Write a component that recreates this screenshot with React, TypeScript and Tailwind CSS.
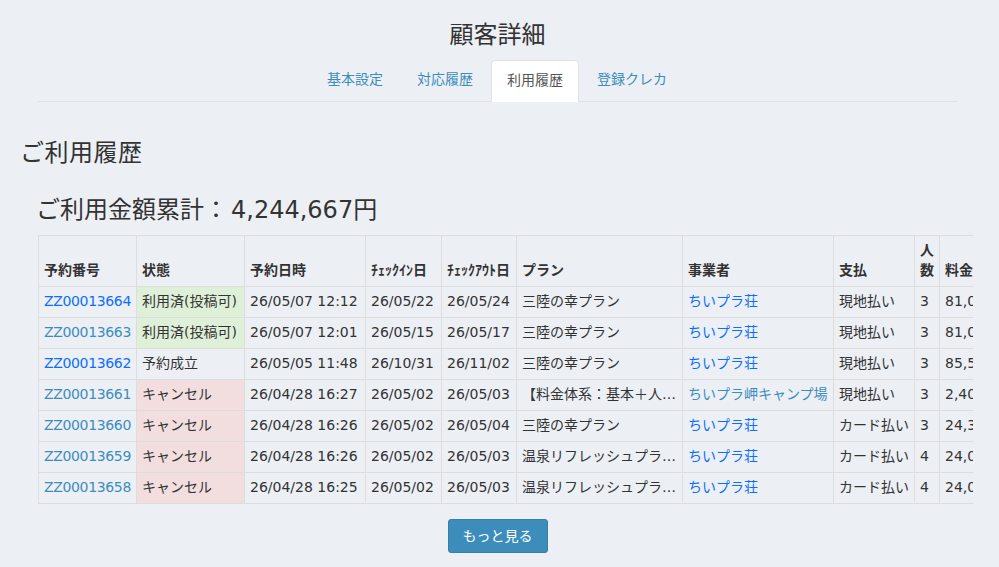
const F = "font-['DejaVu_Sans','Noto_Sans_CJK_JP',sans-serif]";

const colW = ["w-[98px]", "w-[108px]", "w-[121px]", "w-[76px]", "w-[75px]", "w-[166px]", "w-[151px]", "w-[81px]", "w-[25px]", "w-[90px]"];

type Row = {
  id: string;
  fresh: boolean;
  status: string;
  tone: "ok" | "none" | "cancel";
  at: string;
  inn: string;
  out: string;
  plan: string;
  vendor: string;
  vendorOld?: boolean;
  pay: string;
  n: string;
  fee: string;
};

const rows: Row[] = [
  { id: "ZZ00013664", fresh: true, status: "利用済(投稿可)", tone: "ok", at: "26/05/07 12:12", inn: "26/05/22", out: "26/05/24", plan: "三陸の幸プラン", vendor: "ちいプラ荘", pay: "現地払い", n: "3", fee: "81,000" },
  { id: "ZZ00013663", fresh: false, status: "利用済(投稿可)", tone: "ok", at: "26/05/07 12:01", inn: "26/05/15", out: "26/05/17", plan: "三陸の幸プラン", vendor: "ちいプラ荘", pay: "現地払い", n: "3", fee: "81,000" },
  { id: "ZZ00013662", fresh: true, status: "予約成立", tone: "none", at: "26/05/05 11:48", inn: "26/10/31", out: "26/11/02", plan: "三陸の幸プラン", vendor: "ちいプラ荘", pay: "現地払い", n: "3", fee: "85,500" },
  { id: "ZZ00013661", fresh: false, status: "キャンセル", tone: "cancel", at: "26/04/28 16:27", inn: "26/05/02", out: "26/05/03", plan: "【料金体系：基本＋人数】プラン", vendor: "ちいプラ岬キャンプ場", vendorOld: true, pay: "現地払い", n: "3", fee: "2,400" },
  { id: "ZZ00013660", fresh: false, status: "キャンセル", tone: "cancel", at: "26/04/28 16:26", inn: "26/05/02", out: "26/05/04", plan: "三陸の幸プラン", vendor: "ちいプラ荘", pay: "カード払い", n: "3", fee: "24,300" },
  { id: "ZZ00013659", fresh: false, status: "キャンセル", tone: "cancel", at: "26/04/28 16:26", inn: "26/05/02", out: "26/05/03", plan: "温泉リフレッシュプラン朝食付き", vendor: "ちいプラ荘", pay: "カード払い", n: "4", fee: "24,000" },
  { id: "ZZ00013658", fresh: false, status: "キャンセル", tone: "cancel", at: "26/04/28 16:25", inn: "26/05/02", out: "26/05/03", plan: "温泉リフレッシュプラン朝食付き", vendor: "ちいプラ荘", pay: "カード払い", n: "4", fee: "24,000" },
];

const th = "border border-[#dddddd] px-[5px] pb-[6px] pt-0 align-bottom text-left font-bold leading-[20px]";
const td = "border border-[#dddddd] px-[5px] h-[31px] pt-0 pb-[2px] align-middle leading-[20px] whitespace-nowrap overflow-hidden text-ellipsis";
const fresh = "text-[#0d6efd]";
const old = "text-[#3c8dbc]";

export default function App() {
  return (
    <div className={`${F} h-[567px] overflow-hidden bg-[#ecf0f5] text-[14px] text-[#333333]`}>
      <h1 className="pr-[4px] pt-[18px] text-center text-[24px] font-normal leading-[34px]">顧客詳細</h1>

      <nav className="ml-[38px] mr-[41px] mt-[8px] flex h-[42px] justify-center gap-[4px] border-b border-[#dfe3e8] pr-[2px]">
        <a className="h-[41px] px-[15px] leading-[39px] text-[#3c8dbc]">基本設定</a>
        <a className="h-[41px] px-[15px] leading-[39px] text-[#3c8dbc]">対応履歴</a>
        <a className="-mx-[1px] h-[42px] rounded-t-[4px] border border-b-0 border-[#dfe3e8] bg-white px-[15px] leading-[38px] text-[#555555]">利用履歴</a>
        <a className="h-[41px] px-[15px] leading-[39px] text-[#3c8dbc]">登録クレカ</a>
      </nav>

      <h2 className="ml-[20px] mt-[34px] text-[24px] font-normal leading-[34px] tracking-[0.5px]">ご利用履歴</h2>
      <h3 className="ml-[36px] mt-[23px] text-[24px] font-normal leading-[34px]">
        ご利用金額累計：<span className="ml-[3px]">4,244,667円</span>
      </h3>

      <div className="ml-[38px] mt-[8px] w-[935px] overflow-hidden">
        <table className="w-[991px] table-fixed border-collapse">
          <colgroup>
            {colW.map((w) => (
              <col key={w} className={w} />
            ))}
          </colgroup>
          <thead>
            <tr className="h-[51px]">
              <th className={th}>予約番号</th>
              <th className={th}>状態</th>
              <th className={th}>予約日時</th>
              <th className={th}>ﾁｪｯｸｲﾝ日</th>
              <th className={th}>ﾁｪｯｸｱｳﾄ日</th>
              <th className={th}>プラン</th>
              <th className={th}>事業者</th>
              <th className={th}>支払</th>
              <th className={th}>人数</th>
              <th className={th}>料金</th>
            </tr>
          </thead>
          <tbody>
            {rows.map((r) => (
              <tr key={r.id}>
                <td className={`${td} tracking-[-0.35px] ${r.fresh ? fresh : old}`}>{r.id}</td>
                <td className={`${td} ${r.tone === "ok" ? "bg-[#dff0d8]" : r.tone === "cancel" ? "bg-[#f2dede]" : ""}`}>{r.status}</td>
                <td className={td}>{r.at}</td>
                <td className={td}>{r.inn}</td>
                <td className={td}>{r.out}</td>
                <td className={td}>{r.plan}</td>
                <td className={`${td} ${r.vendorOld ? old : fresh}`}>{r.vendor}</td>
                <td className={td}>{r.pay}</td>
                <td className={td}>{r.n}</td>
                <td className={td}>{r.fee}</td>
              </tr>
            ))}
          </tbody>
        </table>
      </div>

      <div className="mt-[15px] flex justify-center pr-[4px]">
        <button className="h-[34px] w-[100px] rounded-[3px] border border-[#367fa9] bg-[#3c8dbc] text-[14px] text-white">もっと見る</button>
      </div>
    </div>
  );
}
